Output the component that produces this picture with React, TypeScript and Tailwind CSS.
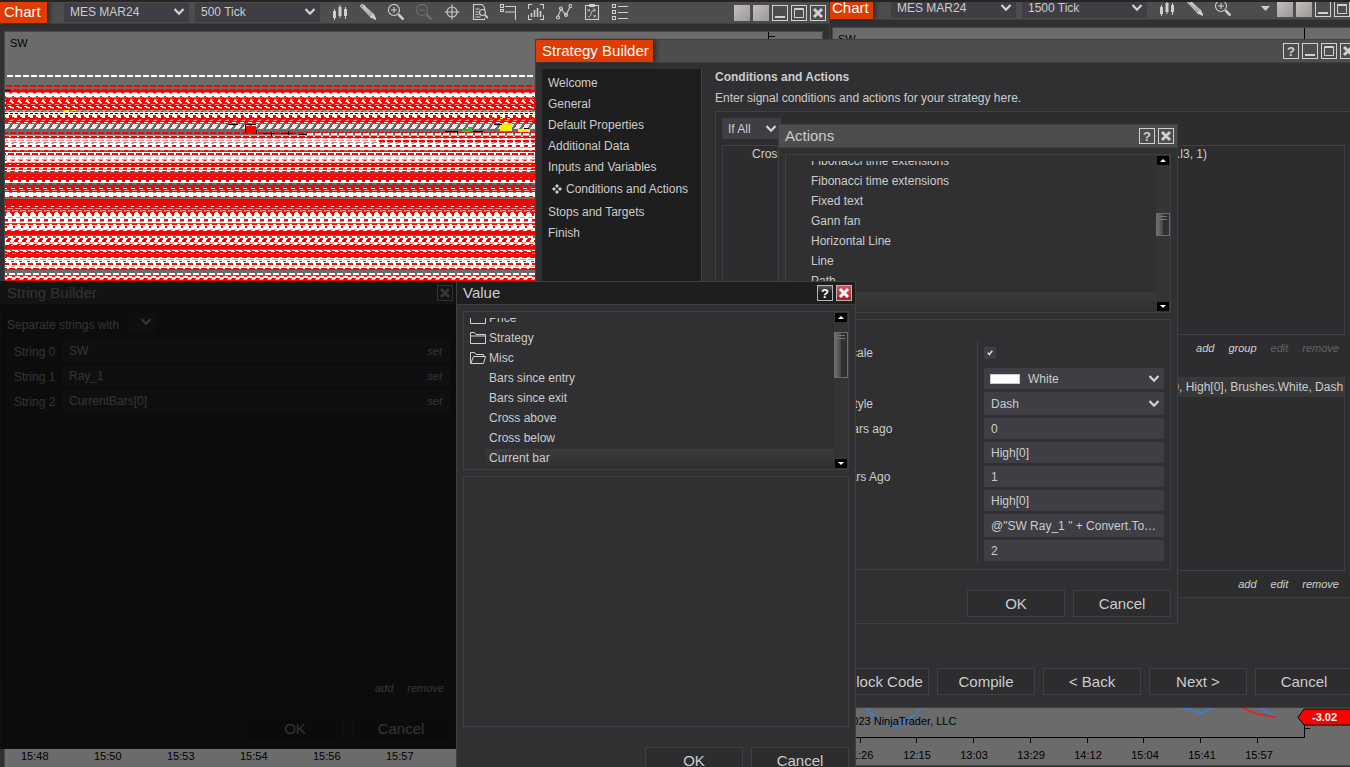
import React from 'react';
import { clsx } from 'clsx';

type Stripe = [y: number, h: number, color: string, dash?: string, offset?: number];

const R = '#ff0000';
const W = '#ffffff';
const G = '#6b6b6b';
const P = '#f58f8f';

// Overlapping ray lines of the chart, from top to bottom
const STRIPES: Stripe[] = [
  [75, 2, W, '6 2', 6],
  [85, 2, R, '6 2', 7],
  [89, 4, R],
  [89, 1, G, '3 5', 2],
  [92, 1, P, '5 3', 1],
  [93, 4, W],
  [93, 1, P, '3 5', 4],
  [96, 2, G, '2 6', 1],
  [97, 1, '#b0a0a0', '4 4', 5],
  [98, 12, R],
  [99, 1, P, '4 4', 3],
  [100, 1, W, '2 6', 3],
  [101, 1, W, '4 4', 4],
  [102, 1, W, '3 5', 2],
  [103, 1, P, '2 6', 1],
  [104, 1, P, '4 4', 6],
  [106, 1, W, '3 5', 5],
  [107, 1, W, '4 4', 3],
  [108, 1, P, '2 6', 1],
  [110, 3, P],
  [110, 2, '#9c7c7c', '5 3', 3],
  [111, 1, R, '2 6', 4],
  [112, 3, '#fff0e0'],
  [113, 1, '#000000', '3 2'],
  [115, 8, R],
  [115, 2, W, '5 3', 1],
  [117, 1, W, '3 5', 7],
  [119, 1, G, '3 5', 2],
  [120, 1, P, '4 4', 4],
  [122, 1, W, '4 4', 5],
  [124, 1, W, '5 3', 0],
  [125, 2, '#e8e8ea', '5 3', 1],
  [127, 1, W, '5 3', 2],
  [128, 1, '#dddddd', '5 3', 3],
  [132, 2, R, '6 2', 3],
  [135, 1, P],
  [136, 2, R],
  [136, 1, W, '2 6', 4],
  [138, 12, W],
  [138, 1, P, '4 4', 2],
  [140, 1, P, '6 2', 3],
  [142, 1, '#9a9090', '5 3', 1],
  [143, 1, P, '3 5', 2],
  [145, 2, R, '4 4', 1],
  [147, 1, P, '5 3', 5],
  [150, 2, R, '6 2', 3],
  [150, 1, P, '2 6', 3],
  [152, 11, W],
  [153, 2, R, '6 2', 5],
  [155, 1, P, '6 2', 2],
  [157, 1, P, '3 5', 1],
  [159, 2, P, '5 3', 3],
  [160, 1, R, '2 6', 1],
  [162, 1, P, '6 2', 6],
  [163, 4, R],
  [164, 1, W, '2 6', 4],
  [167, 5, W],
  [168, 2, R, '4 4', 2],
  [169, 1, '#808080', '4 4', 5],
  [171, 1, R, '5 3', 3],
  [172, 2, '#b03a2e'],
  [174, 6, R],
  [175, 1, G, '3 5', 2],
  [177, 1, P, '2 6', 5],
  [180, 3, W],
  [180, 2, R, '3 5', 3],
  [183, 2, R],
  [183, 2, G, '5 3', 1],
  [185, 7, R],
  [186, 1, '#9c5050', '4 4', 4],
  [188, 1, W, '4 4', 2],
  [190, 1, P, '5 3', 1],
  [192, 5, W],
  [192, 1, '#888888', '3 5', 4],
  [196, 1, R, '4 4', 4],
  [197, 2, G],
  [199, 12, '#f80404'],
  [199, 1, '#8c3030', '5 3', 1],
  [201, 1, '#a02020', '5 3', 2],
  [204, 1, '#c01818', '6 2', 3],
  [206, 1, W, '3 5', 2],
  [208, 1, P, '6 2', 6],
  [210, 1, P, '6 2', 1],
  [212, 11, W],
  [212, 1, R, '5 3', 3],
  [213, 1, R, '3 5', 2],
  [214, 2, R, '2 6', 1],
  [217, 1, P, '5 3', 5],
  [219, 2, R, '4 4', 1],
  [221, 1, P, '5 3', 2],
  [224, 6, W],
  [224, 1, R, '5 3', 1],
  [226, 2, R, '2 6', 0],
  [229, 1, P, '3 5', 3],
  [230, 5, R],
  [230, 1, W, '4 4', 2],
  [235, 1, G],
  [236, 2, W, '5 3', 5],
  [238, 7, W],
  [238, 1, R, '3 5', 5],
  [239, 1, R, '4 4', 6],
  [240, 2, R, '4 4', 7],
  [242, 1, P, '4 4', 3],
  [244, 1, R, '4 4', 4],
  [245, 4, R],
  [245, 1, W, '2 6', 2],
  [249, 1, G],
  [250, 1, W, '6 2', 1],
  [251, 6, R],
  [251, 1, W, '4 4', 6],
  [253, 1, P, '4 4', 1],
  [255, 1, '#b04040', '3 5', 4],
  [257, 12, W],
  [257, 1, R, '5 3', 3],
  [259, 1, P, '6 2', 5],
  [261, 1, R, '3 5', 2],
  [263, 2, R, '5 3', 1],
  [266, 1, '#9ab0b0', '4 4', 2],
  [268, 2, R, '6 2', 4],
  [270, 1, G],
  [273, 2, W, '6 2', 4],
  [276, 3, W],
  [276, 1, R, '3 5', 1],
  [278, 1, R, '4 4', 5],
  [279, 2, R],
  [279, 1, P, '4 4', 2],
];

const TIMES_LEFT = ['15:48', '15:50', '15:53', '15:54', '15:56', '15:57'];
const TIMES_RIGHT = ['11:26', '12:15', '13:03', '13:29', '14:12', '15:04', '15:41', '15:57'];

const STEPS = ['Welcome', 'General', 'Default Properties', 'Additional Data', 'Inputs and Variables', 'Conditions and Actions', 'Stops and Targets', 'Finish'];
const ACTIVE_STEP = 'Conditions and Actions';

const ACTION_ITEMS = ['Fibonacci time extensions', 'Fibonacci time extensions', 'Fixed text', 'Gann fan', 'Horizontal Line', 'Line', 'Path', 'Ray'];
const MISC_ITEMS = ['Bars since entry', 'Bars since exit', 'Cross above', 'Cross below', 'Current bar'];

const Chevron = ({ className }: { className?: string }) => (
  <svg className={clsx('w-3 h-2 pointer-events-none', className)} viewBox="0 0 12 8" fill="none" stroke="#d4d4d4" strokeWidth={2.2}>
    <path d="M1.500 1 6 5.700 10.500 1" />
  </svg>
);

type SelectProps = { label: string; value: string; className?: string; selectClass?: string };

const Select = ({ label, value, className, selectClass }: SelectProps) => (
  <div className={clsx('grid items-center bg-[#3f3e45]', className)}>
    <select aria-label={label} defaultValue={value} className={clsx('col-start-1 row-start-1 w-full h-full appearance-none bg-transparent outline-none', selectClass ?? 'pl-1.5')}>
      <option value={value}>{value}</option>
    </select>
    <Chevron className="col-start-1 row-start-1 justify-self-end mr-1" />
  </div>
);

const ICONS: Record<string, React.ReactNode> = {
  bars: <path fill="currentColor" stroke="none" d="M1 7h3v7H1zM2 5h1v11H2zM6.500 3h3v9h-3zM7.500 1h1v13h-1zM12 5h3v7h-3zM13 3h1v12h-1z" />,
  pencil: (
    <>
      <path d="M.5 2 2.500.5 13.500 10.500 11 13z M2.500 3.500 5 1.500 M3 2.500 12 11.500" />
      <path fill="currentColor" d="m13.500 10.500-2.500 2.500 5 2.500z" />
    </>
  ),
  zoomIn: (
    <>
      <circle cx="6" cy="6" r="5.500" />
      <path d="M3 6h6M6 3v6" />
      <path strokeWidth="2.500" d="m10.500 10.500 5 5" />
    </>
  ),
  zoomOut: (
    <>
      <circle cx="6" cy="6" r="5.500" />
      <path d="M3 6h6" />
      <path strokeWidth="2.500" d="m10.500 10.500 5 5" />
    </>
  ),
  cross: (
    <>
      <circle cx="8" cy="8" r="5" />
      <path d="M8 .5v15M.5 8h15" />
    </>
  ),
  report: (
    <>
      <path d="M12.500 6V3.500L10 .5H1.500v15h11V14M3.500 5h4M3.500 8h3M3.500 10.500h3M3.500 13h5" />
      <circle cx="10.500" cy="8.500" r="3" />
      <path strokeWidth="1.800" d="m13 11 3 3" />
    </>
  ),
  axis: <path d="M.5 .5h3v3h-3zM.5 5.500h3v2h-3zM5 2.500h10.500V16M15.500 8H5" />,
  panel: (
    <>
      <path d="M4 .5H.5V5M12 .5h3.500V5M4 15.500H.5V11M12 15.500h3.500V11" />
      <path strokeWidth="1.600" d="M3.500 9v4M6.500 6v7M9.500 4v9M12.500 7v6" />
    </>
  ),
  nodes: (
    <>
      <path d="M2 12.500 5 5l5 6 4-8" />
      <circle cx="2" cy="13.500" r="1.500" />
      <circle cx="5" cy="4.500" r="1.500" />
      <circle cx="10" cy="11" r="1.500" />
      <circle cx="14.500" cy="2" r="1.500" />
    </>
  ),
  board: (
    <>
      <path d="M1.500 1.500h13v14h-13zM5.500 .5h5v2h-5z" />
      <path strokeWidth=".9" d="M3.500 5l2.500 2.500M6 5 3.500 7.500M9.500 11l2.500 2.500M12 11l-2.500 2.500M4 13c5 0 1-7 7-7M9.500 4.500 11.500 6l-2 2" />
    </>
  ),
  list: <path d="M.5 .5h3v3h-3zM.5 6.500h3v3h-3zM.5 12.500h3v3h-3zM6 2.500h10M6 8.500h10M6 14.500h10" />,
};

const TOOLS = ['bars', 'pencil', 'zoomIn', 'zoomOut', 'cross', 'report', 'axis', 'panel', 'nodes', 'board', 'list'];

const ToolButton = ({ name }: { name: string }) => (
  <button type="button" aria-label={name} className={clsx('flex-none', name === 'zoomOut' ? 'text-[#6d6d6d]' : 'text-[#cfcfcf]')}>
    <svg className="w-4 h-4" viewBox="0 0 16 16" fill="none" stroke="currentColor" strokeWidth={1.1}>
      {ICONS[name]}
    </svg>
  </button>
);

type Kind = 'help' | 'min' | 'max' | 'close' | 'link';

const WindowButton = ({ kind, active }: { kind: Kind; active?: boolean }) => {
  if (kind === 'link') {
    return <button type="button" aria-label="Link" className="flex-none w-4 h-4 bg-linear-to-br from-[#c4c0c0] to-[#9d9898]" />;
  }
  return (
    <button
      type="button"
      aria-label={kind}
      className={clsx(
        'flex-none w-4 h-4 border flex items-center justify-center',
        active ? 'border-[#b5b5b5] text-white' : 'border-[#d0d0d0] text-[#d0d0d0]',
        active && kind === 'close' && 'bg-linear-to-b from-[#c65a5f] to-[#b0151d]',
        active && kind === 'help' && 'bg-linear-to-b from-[#5a5a5a] via-[#1e1e1e] to-[#1e1e1e]',
      )}
    >
      {kind === 'help' && <span className="text-[13px] leading-none font-bold">?</span>}
      {kind !== 'help' && (
        <svg className="w-3.5 h-3.5 flex-none" viewBox="0 0 14 14" fill="none" stroke="currentColor" strokeWidth={2}>
          {kind === 'min' && <path d="M2 11h10" />}
          {kind === 'max' && <path strokeWidth={1} d="M2.500 2.500h9v9h-9zM2 3.500h10" />}
          {kind === 'close' && <path strokeWidth={3} d="m3 3 8 8M11 3l-8 8" />}
        </svg>
      )}
    </button>
  );
};

const Tab = ({ children, className }: { children: React.ReactNode; className: string }) => (
  <h2 className={clsx('flex-none h-full flex items-center bg-[#de3c00] text-white text-[15px] shadow-[3px_0_4px_#00000066]', className)}>{children}</h2>
);

const DialogButton = ({ children }: { children: React.ReactNode }) => (
  <button type="button" className="flex-none w-[98px] h-[27px] border border-[#404044] bg-[#2d2d2f] text-[15px] text-[#cccccc] whitespace-nowrap">{children}</button>
);

const TextLink = ({ children, muted }: { children: React.ReactNode; muted?: boolean }) => (
  <a href="#" className={clsx('italic text-[11px]', muted ? 'text-[#626264]' : 'text-[#d0d0d0]')}>{children}</a>
);

const ScrollBar = ({ gap, thumb }: { gap: string; thumb: string }) => (
  <div className="flex-none w-3.5 pt-px flex flex-col items-center bg-[#343434]">
    <button type="button" aria-label="Scroll up" className="flex-none w-3 h-[9px] bg-black flex items-center justify-center">
      <svg className="w-1.5 h-[3px]" viewBox="0 0 6 3"><path fill="#fff" d="M0 3 3 0l3 3z" /></svg>
    </button>
    <div className={clsx('flex-none', gap)} />
    <div className={clsx('flex-none w-3.5 border border-[#6c6c6c] bg-linear-to-r from-[#6a6a6a] from-10% via-[#454545] via-50% to-[#303032] to-50% pt-0.5 flex flex-col items-center gap-0.5', thumb)}>
      <span className="w-2 h-px bg-[#777777]" />
      <span className="w-2 h-px bg-[#777777]" />
    </div>
    <button type="button" aria-label="Scroll down" className="flex-none mt-auto mb-px w-3 h-[9px] bg-black flex items-center justify-center">
      <svg className="w-1.5 h-[3px]" viewBox="0 0 6 3"><path fill="#fff" d="M0 0h6L3 3z" /></svg>
    </button>
  </div>
);

const ListRow = ({ children, selected, indent }: { children: React.ReactNode; selected?: boolean; indent: string }) => (
  <li className={clsx('flex-none h-5 flex items-center', indent)}>
    <span className={clsx('w-full h-[18px] flex items-center pl-[3px]', selected && 'bg-linear-to-b from-[#3a3a3a] to-[#303030]')}>{children}</span>
  </li>
);

const Folder = ({ open }: { open?: boolean }) => (
  <svg className="flex-none w-4 h-[14px] mr-[3px]" viewBox="0 0 16 14" fill="none" stroke="#d0d0d0">
    {open ? <path d="M13.500 5.500v-2H6L4.500 1.500h-4v11h13l2-7h-12L1 12" /> : <path d="M.5 12.500v-11h4L6 3.500h9.500v9zM.5 5h15" />}
  </svg>
);

const Dialog = ({ title, className, active, buttons, children }: { title: string; className: string; active?: boolean; buttons: Kind[]; children: React.ReactNode }) => (
  <section className={clsx('absolute flex flex-col border border-[#404044] bg-[#303032]', className)}>
    <header className={clsx('flex-none h-[23px] flex items-center gap-[3px] pl-1.5 pr-[3px] border-b border-[#404044]', active ? 'bg-[#1e1e1e]' : 'bg-[#4d4d4d]')}>
      <h2 className="flex-1 text-[15px]">{title}</h2>
      {buttons.map((kind) => <WindowButton key={kind} kind={kind} active={active} />)}
    </header>
    {children}
  </section>
);

const ChartHeader = ({ interval, tools, children }: { interval: string; tools: string[]; children: React.ReactNode }) => (
  <header className="flex-none h-[23px] flex items-center bg-[#4d4d4d] border-b border-[#404044]">
    {children}
    <Select label="Instrument" value="MES MAR24" className="flex-none w-[125px] h-[19px] mr-1.5" />
    <Select label="Interval" value={interval} className="flex-none w-[125px] h-[19px] mr-3" />
    <div className="flex-none flex gap-3">
      {tools.map((name) => <ToolButton key={name} name={name} />)}
    </div>
  </header>
);

const ChartOne = () => (
  <section className="absolute left-0 top-px -bottom-2 w-[829px] flex flex-col bg-[#303032]">
    <div className="flex-none grid">
      <div className="col-start-1 row-start-1">
        <ChartHeader interval="500 Tick" tools={TOOLS}>
          <div className="flex-none w-16 h-full flex"><Tab className="pl-1 pr-1.5">Chart</Tab></div>
        </ChartHeader>
      </div>
      <div className="col-start-1 row-start-1 justify-self-end self-center flex gap-[3px] pr-[3px]">
        {(['link', 'link', 'min', 'max', 'close'] as Kind[]).map((kind, i) => <WindowButton key={i} kind={kind} />)}
      </div>
    </div>
    <div className="flex-1 mt-[7px] ml-1 mr-1.5 border border-[#48484a] bg-[#6b6b6b] flex flex-col text-[11px] text-black">
      <svg className="w-full flex-1" shapeRendering="crispEdges">
        <g transform="translate(0 -32)">
          {STRIPES.map(([y, h, color, dash, offset], i) => (
            <line key={i} x1="0" x2="100%" y1={y + h / 2} y2={y + h / 2} stroke={color} strokeWidth={h} strokeDasharray={dash} strokeDashoffset={offset} />
          ))}
          <path fill="#ffee00" d="M59 110h5v2h-5zM67 110h4v1h-4zM495 123h12v8h-12zM495 118h3v1h-3zM502 118h3v1h-3zM513 129h12v3h-12z" />
          <path fill="#2fc02f" d="M457 130h9v2h-9zM463 127h4v3h-4zM447 133h9v2h-9zM480 123h8v1h-8zM484 118h3v1h-3z" />
          <path fill="none" stroke="#000" d="M240.500 133v-9h10M251.500 130v4M258 133h12M266 132v4M276 133h12M283 131v4M294 134h8M440 131h12v3M468 131h10M489 124h8M519 128h5M0 90h5M223 124h10" />
          <path fill={R} d="M241 126h10v7h-10z" />
          <path fill="none" stroke={W} strokeWidth="2" strokeDasharray="6 2" d="M302 134h230" />
          <path fill="none" stroke={R} strokeWidth="2" strokeDasharray="6 2" d="M374 141h158" />
          <path fill="none" stroke="#000" d="M763.500 31v9M764 36.500h6" />
        </g>
        <text x="5" y="15">SW</text>
      </svg>
      <div className="flex-none h-7 flex items-center pl-4 pb-2">
        {TIMES_LEFT.map((t) => <span key={t} className="flex-none w-[73px] pr-1">{t}</span>)}
      </div>
    </div>
  </section>
);

const ChartTwo = () => (
  <section className="absolute left-[829px] -top-[3px] bottom-0 -right-[5px] flex flex-col border-l border-[#404044] bg-[#303032]">
    <div className="flex-none grid">
      <div className="col-start-1 row-start-1">
        <ChartHeader interval="1500 Tick" tools={['bars', 'pencil', 'zoomIn']}>
          <div className="flex-none w-[61px] h-full flex"><Tab className="pl-0.5 pr-1">Chart</Tab></div>
        </ChartHeader>
      </div>
      <div className="col-start-1 row-start-1 justify-self-end self-center flex items-center gap-[3px] pr-[5px]">
        <svg className="w-[9px] h-[5px] mr-1" viewBox="0 0 9 5"><path fill="#d0d0d0" d="M0 0h9L4.500 5z" /></svg>
        {(['link', 'link', 'min', 'max'] as Kind[]).map((kind, i) => <WindowButton key={i} kind={kind} />)}
      </div>
    </div>
    <div className="flex-1 mt-[7px] mb-px ml-0.5 border-y border-l border-[#48484a] bg-[#6b6b6b] flex flex-col justify-between text-[11px] text-black">
      <svg className="w-full h-5" shapeRendering="crispEdges">
        <text x="5" y="15">SW</text>
        <path stroke="#000" d="M471.500 0v20" />
      </svg>
      <svg className="w-full h-[58px]" fill="none">
        <path stroke="#2e86e0" strokeWidth="1.500" d="M32 0 47 16 64 19 83 7 88 0M348 0 368 6 380 0M427 0 443 10" />
        <path stroke="#e02020" strokeWidth="1.500" d="M408 0 424 7 443 10" />
        <path stroke="#000" shapeRendering="crispEdges" d="M0 30.500h471.500V4M471 21.500h6M27.500 31v5M83.500 31v5M140.500 31v5M197.500 31v5M254.500 31v5M310.500 31v5M367.500 31v5M424.500 31v5" />
        <text x="2" y="18" fill="#000">© 2023 NinjaTrader, LLC</text>
        {TIMES_RIGHT.map((t, i) => (
          <text key={i} x={27 + i * 57} y="52" textAnchor="middle" fill="#000">{t}</text>
        ))}
        <path fill={R} stroke="#000" d="M465 10.500 471 2h60v16h-60z" />
        <text x="479" y="14" fill="#fff" fontWeight="bold">-3.02</text>
      </svg>
    </div>
  </section>
);

const StrategyBuilder = () => (
  <section className="absolute left-[535px] top-[39px] -right-[10px] h-[669px] flex flex-col border border-[#404044] bg-[#303032]">
    <header className="flex-none h-[23px] flex items-center gap-[3px] pr-[3px] bg-[#4d4d4d] border-b border-[#404044]">
      <Tab className="pl-1.5 pr-1">Strategy Builder</Tab>
      <span className="flex-1" />
      {(['help', 'min', 'max', 'close'] as Kind[]).map((kind) => <WindowButton key={kind} kind={kind} />)}
    </header>
    <div className="flex-none flex pt-1.5 pl-1.5">
      <nav className="flex-none w-[160px] pt-[3px] pl-1.5 bg-[#1e1e1e] border-r border-[#404044]">
        {STEPS.map((step) => (
          <a key={step} href="#" className={clsx('flex items-center whitespace-nowrap', step === ACTIVE_STEP ? 'h-6 pl-1' : 'h-[21px]')}>
            {step === ACTIVE_STEP && (
              <svg className="w-2.5 h-2.5 mr-1" viewBox="0 0 10 10"><path fill="#d0d0d0" d="m5 0 2 2-2 2-2-2zM5 6l2 2-2 2-2-2zM2 3l2 2-2 2-2-2zM8 3l2 2-2 2-2-2z" /></svg>
            )}
            {step}
          </a>
        ))}
      </nav>
      <div className="flex-1 min-w-0 pl-[13px]">
        <h3 className="h-[21px] pb-1.5 flex items-center font-bold">Conditions and Actions</h3>
        <p className="h-[21px] pb-1.5 flex items-center">Enter signal conditions and actions for your strategy here.</p>
        <div className="border border-r-0 border-[#404044] bg-[#2d2d2f] pl-1.5 pr-3.5 pt-1.5">
          <Select label="Condition mode" value="If All" className="w-[59px] h-[21px]" />
          <div className="mt-1.5 h-[190px] border border-[#404044] flex">
            <span className="flex-none w-[454px] h-4 pl-[29px] overflow-hidden whitespace-nowrap">CrossAbove(Close, Strategy.Level</span>
            <span>.l3, 1)</span>
          </div>
          <div className="h-[26px] flex items-center justify-end gap-3.5 pr-1.5">
            <TextLink>add</TextLink>
            <TextLink>group</TextLink>
            <TextLink muted>edit</TextLink>
            <TextLink muted>remove</TextLink>
          </div>
          <div className="mt-4 h-[194px] border border-[#404044] border-t-0">
            <div className="h-5 flex items-center overflow-hidden whitespace-nowrap bg-[#38383a]">
              <span className="flex-none w-[456px] overflow-hidden text-right">DrawRay(@"SW Ray_1 " + Convert.ToString(CurrentBars[0]), 1, High[0], 0</span>
              <span>, High[0], Brushes.White, Dash</span>
            </div>
          </div>
          <div className="h-[26px] flex items-center justify-end gap-3.5 pr-1.5">
            <TextLink>add</TextLink>
            <TextLink>edit</TextLink>
            <TextLink>remove</TextLink>
          </div>
        </div>
      </div>
    </div>
    <footer className="mt-auto mb-3 mr-1.5 flex justify-end gap-2">
      <DialogButton>Unlock Code</DialogButton>
      <DialogButton>Compile</DialogButton>
      <DialogButton>&lt; Back</DialogButton>
      <DialogButton>Next &gt;</DialogButton>
      <DialogButton>Cancel</DialogButton>
    </footer>
  </section>
);

const PropertyRow = ({ label, children }: { label: string; children: React.ReactNode }) => (
  <label className="flex">
    <span className="flex-none w-[161px] mr-1.5 pb-[3px] border-r border-[#404044] flex items-center">{label}</span>
    <span className="flex-1 pb-[3px]">{children}</span>
  </label>
);

const PropertyInput = ({ value, tall }: { value: string; tall?: boolean }) => (
  <input type="text" defaultValue={value} className={clsx('block w-full px-[7px] bg-[#3f3e45] outline-none text-ellipsis', tall ? 'h-[23px]' : 'h-[21px]')} />
);

const ActionsDialog = () => (
  <Dialog title="Actions" className="left-[778px] top-[124px] w-[400px] h-[500px]" buttons={['help', 'close']}>
    <div className="flex-none mt-1.5 mx-1.5 h-[159px] border border-[#404044] flex">
      <ul className="flex-1 mt-1.5 mb-px flex flex-col justify-end overflow-hidden">
        {ACTION_ITEMS.map((item, i) => <ListRow key={i} indent="pl-[22px]" selected={item === 'Ray'}>{item}</ListRow>)}
      </ul>
      <ScrollBar gap="h-12" thumb="h-[23px]" />
    </div>
    <div className="flex-none mt-1.5 mx-1.5 h-[251px] border border-[#404044] pt-[21px] pl-[31px] pr-1.5">
      <PropertyRow label="Auto scale">
        <span className="h-6 flex items-center">
          <span className="grid place-items-center">
            <input type="checkbox" defaultChecked aria-label="Auto scale" className="col-start-1 row-start-1 appearance-none w-3 h-3 bg-[#3f3e45]" />
            <svg className="col-start-1 row-start-1 w-1.5 h-1.5 pointer-events-none" viewBox="0 0 8 8" fill="none" stroke="#e0e0e0" strokeWidth={2}><path d="M1 3.500 3 6l4-5" /></svg>
          </span>
        </span>
      </PropertyRow>
      <PropertyRow label="Color">
        <span className="grid items-center bg-[#3f3e45]">
          <Select label="Color" value="White" className="col-start-1 row-start-1 h-[21px]" selectClass="pl-11" />
          <span className="col-start-1 row-start-1 w-[30px] h-2.5 ml-1.5 bg-white border border-[#c8c8c8] pointer-events-none" />
        </span>
      </PropertyRow>
      <PropertyRow label="Dash style"><Select label="Dash style" value="Dash" className="h-[23px]" selectClass="pl-[7px]" /></PropertyRow>
      <PropertyRow label="Start bars ago"><PropertyInput value="0" /></PropertyRow>
      <PropertyRow label="Start Y"><PropertyInput value="High[0]" /></PropertyRow>
      <PropertyRow label="End Bars Ago"><PropertyInput value="1" /></PropertyRow>
      <PropertyRow label="End Y"><PropertyInput value="High[0]" /></PropertyRow>
      <PropertyRow label="Tag"><PropertyInput value={'@"SW Ray_1 " + Convert.To…'} tall /></PropertyRow>
      <PropertyRow label="Width"><PropertyInput value="2" /></PropertyRow>
    </div>
    <footer className="mt-auto mb-1.5 mr-1.5 flex justify-end gap-2">
      <DialogButton>OK</DialogButton>
      <DialogButton>Cancel</DialogButton>
    </footer>
  </Dialog>
);

const StringBuilder = () => (
  <Dialog title="String Builder" className="left-0 top-[281px] w-[457px] h-[468px]" buttons={['close']}>
    <div className="flex-none flex items-center gap-2 pl-1.5 pt-1.5">
      <span className="pt-1.5">Separate strings with</span>
      <Select label="Separate strings with" value="" className="w-[29px] h-[21px]" />
    </div>
    <div className="flex-none mt-1.5 mx-1.5 h-[336px] border border-[#404044]">
      {['SW', 'Ray_1', 'CurrentBars[0]'].map((value, i) => (
        <div key={value} className="flex items-start mb-[3px]">
          <label htmlFor={`string-${i}`} className="flex-none w-[54px] h-[22px] pl-1.5 pt-0.5 flex items-center">String {i}</label>
          <div className="flex-1 h-[22px] flex items-center bg-[#3f3e45] pl-[7px] pr-[7px]">
            <input id={`string-${i}`} type="text" defaultValue={value} className="flex-1 min-w-0 bg-transparent outline-none" />
            <TextLink>set</TextLink>
          </div>
        </div>
      ))}
    </div>
    <div className="flex-none h-[26px] flex items-center justify-end gap-3.5 pr-3">
      <TextLink>add</TextLink>
      <TextLink>remove</TextLink>
    </div>
    <footer className="mt-auto mb-1.5 mr-1.5 flex justify-end gap-2">
      <DialogButton>OK</DialogButton>
      <DialogButton>Cancel</DialogButton>
    </footer>
    {/* Blocked while the Value dialog is open */}
    <div className="absolute -inset-px bg-black/75" />
  </Dialog>
);

const ValueDialog = () => (
  <Dialog title="Value" className="left-[456px] top-[281px] w-[400px] h-[500px]" buttons={['help', 'close']} active>
    <div className="flex-none mt-1.5 mx-1.5 h-[159px] border border-[#404044] flex">
      <ul className="flex-1 mt-1.5 mb-px pl-1.5 flex flex-col justify-end overflow-hidden">
        <ListRow indent="-ml-[3px]"><Folder />Price</ListRow>
        <ListRow indent="-ml-[3px]"><Folder />Strategy</ListRow>
        <ListRow indent="-ml-[3px]"><Folder open />Misc</ListRow>
        {MISC_ITEMS.map((item) => <ListRow key={item} indent="pl-4" selected={item === 'Current bar'}>{item}</ListRow>)}
      </ul>
      <ScrollBar gap="h-2.5" thumb="h-[46px]" />
    </div>
    <div className="flex-none mt-1.5 mx-1.5 h-[251px] border border-[#404044]" />
    <footer className="mt-auto mb-1.5 mr-1.5 flex justify-end gap-2">
      <DialogButton>OK</DialogButton>
      <DialogButton>Cancel</DialogButton>
    </footer>
  </Dialog>
);

export default function App() {
  return (
    <main className="relative w-full h-screen overflow-hidden bg-[#2d2d2f] text-[12px] leading-4 text-[#cccccc] font-['Liberation_Sans',Arial,sans-serif]">
      <ChartOne />
      <ChartTwo />
      <div className="absolute inset-x-0 top-0 h-0.5 bg-[#2a2321]" />
      <StrategyBuilder />
      <ActionsDialog />
      <StringBuilder />
      <ValueDialog />
    </main>
  );
}
